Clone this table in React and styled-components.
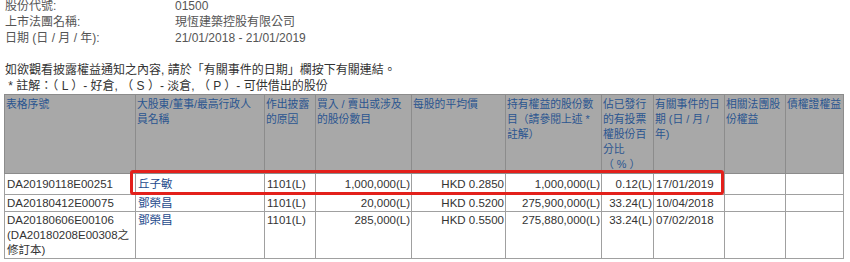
import styled, { createGlobalStyle } from "styled-components";

const Global = createGlobalStyle`
  body {
    margin: 0;
    background: #ffffff;
    font-family: "Liberation Sans", "Noto Sans CJK TC", sans-serif;
    font-size: 12px;
    color: #333333;
  }
`;

const headers = [
  "表格序號",
  <>
    大股東/董事/最高行政人
    <br />
    員名稱
  </>,
  "作出披露的原因",
  "買入 / 賣出或涉及的股份數目",
  "每股的平均價",
  "持有權益的股份數目（請參閱上述 * 註解）",
  <>
    佔已發行的有投票權股份百分比
    <br />（ % ）
  </>,
  "有關事件的日期 (日 / 月 / 年)",
  <>
    相關法團股
    <br />
    份權益
  </>,
  "債權證權益",
];

const widths = [131, 129, 51, 96, 94, 96, 52, 71, 61, 58];

const rows = [
  {
    id: "DA20190118E00251",
    name: "丘子敏",
    reason: "1101(L)",
    shares: "1,000,000(L)",
    price: "HKD 0.2850",
    held: "1,000,000(L)",
    pct: "0.12(L)",
    date: "17/01/2019",
    mark: true,
  },
  {
    id: "DA20180412E00075",
    name: "鄧榮昌",
    reason: "1101(L)",
    shares: "20,000(L)",
    price: "HKD 0.5200",
    held: "275,900,000(L)",
    pct: "33.24(L)",
    date: "10/04/2018",
  },
  {
    id: "DA20180606E00106 (DA20180208E00308之修訂本)",
    name: "鄧榮昌",
    reason: "1101(L)",
    shares: "285,000(L)",
    price: "HKD 0.5500",
    held: "275,880,000(L)",
    pct: "33.24(L)",
    date: "07/02/2018",
  },
];

const Page = styled.div`
  position: relative;
  padding: 0 4px;
  margin-top: -2px;
`;

const Info = styled.div`
  display: grid;
  grid-template-columns: 170px 1fr;
  line-height: 16px;
  color: #555555;
  padding-left: 1px;
`;

const Notes = styled.div`
  margin-top: 16px;
  line-height: 16px;
  color: #333333;
  padding-left: 1px;
`;

const Table = styled.table`
  border-collapse: collapse;
  table-layout: fixed;
  width: 839px;
  font-size: 11.5px;
  line-height: 15px;
`;

const Th = styled.th`
  background: #a8a8a8;
  color: #2a5590;
  font-weight: normal;
  font-size: 10.8px;
  text-align: left;
  vertical-align: top;
  word-break: break-all;
  padding: 2px 0 1px 1px;
  border: 1px solid #8c8c8c;
`;

const Td = styled.td`
  border: 1px solid #a0a0a0;
  vertical-align: top;
  text-align: ${(p) => (p.$right ? "right" : "left")};
  padding: ${(p) => (p.$tall ? "3px 1px 2px 2px" : "1px 1px 0 2px")};
  color: ${(p) => (p.$link ? "#1d4a8c" : "#333333")};
  white-space: ${(p) => (p.$nowrap ? "nowrap" : "normal")};
`;

const Highlight = styled.div`
  position: absolute;
  left: 130px;
  top: 172px;
  width: 588px;
  height: 19px;
  border: 3px solid #e3201b;
  border-radius: 3px;
  pointer-events: none;
`;

export default function App() {
  return (
    <>
      <Global />
      <Page>
        <Info>
          <span>股份代號:</span>
          <span>01500</span>
          <span>上市法團名稱:</span>
          <span>現恆建築控股有限公司</span>
          <span>日期 (日 / 月 / 年):</span>
          <span>21/01/2018 - 21/01/2019</span>
        </Info>
        <Notes>
          <div>如欲觀看披露權益通知之內容, 請於「有關事件的日期」欄按下有關連結。</div>
          <div>&nbsp;* 註解：（ L ）- 好倉, （ S ）- 淡倉, （ P ）- 可供借出的股份</div>
        </Notes>
        <Table>
          <colgroup>
            {widths.map((w, i) => (
              <col key={i} style={{ width: w }} />
            ))}
          </colgroup>
          <thead>
            <tr>
              {headers.map((h, i) => (
                <Th key={i}>{h}</Th>
              ))}
            </tr>
          </thead>
          <tbody>
            {rows.map((r) => (
              <tr key={r.id}>
                <Td $tall={r.mark}>{r.id}</Td>
                <Td $tall={r.mark} $link>{r.name}</Td>
                <Td $tall={r.mark}>{r.reason}</Td>
                <Td $tall={r.mark} $right>{r.shares}</Td>
                <Td $tall={r.mark} $right>{r.price}</Td>
                <Td $tall={r.mark} $right $nowrap>{r.held}</Td>
                <Td $tall={r.mark} $right>{r.pct}</Td>
                <Td $tall={r.mark}>{r.date}</Td>
                <Td $tall={r.mark}></Td>
                <Td $tall={r.mark}></Td>
              </tr>
            ))}
          </tbody>
        </Table>
        <Highlight />
      </Page>
    </>
  );
}
